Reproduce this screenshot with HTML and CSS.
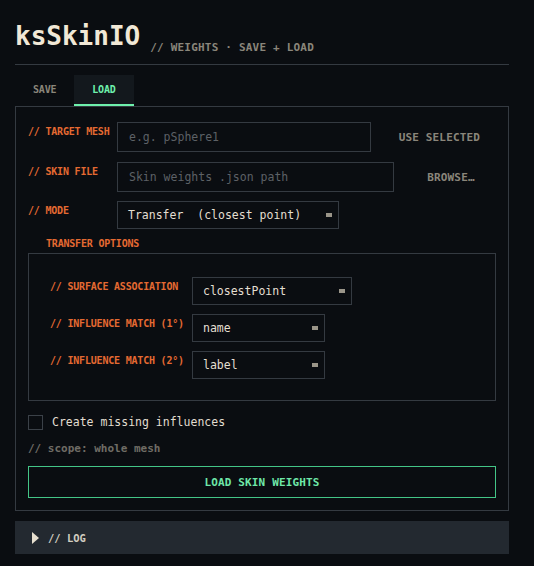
FILE: index.html
```html
<!DOCTYPE html>
<html lang="en">
<head>
    <meta charset="UTF-8">
    <title>ksSkinIO</title>
    <link rel="stylesheet" href="styles.css">
</head>
<body>
    <div class="app">
        <header class="head">
            <h1 class="title">ksSkinIO</h1>
            <span class="sub">// WEIGHTS · SAVE + LOAD</span>
        </header>

        <nav class="tabs">
            <button class="tab">SAVE</button>
            <button class="tab active">LOAD</button>
        </nav>

        <section class="panel">
            <div class="row">
                <label class="lbl">// TARGET MESH</label>
                <input class="field" type="text" placeholder="e.g. pSphere1">
                <button class="link">USE SELECTED</button>
            </div>
            <div class="row">
                <label class="lbl">// SKIN FILE</label>
                <input class="field" type="text" placeholder="Skin weights .json path">
                <button class="link">BROWSE…</button>
            </div>
            <div class="row">
                <label class="lbl">// MODE</label>
                <div class="select w-mode"><span class="val">Transfer  (closest point)</span><i class="caret"></i></div>
            </div>

            <h3 class="group-title">TRANSFER OPTIONS</h3>
            <div class="group">
                <div class="row">
                    <label class="lbl wide">// SURFACE ASSOCIATION</label>
                    <div class="select w-surface"><span class="val">closestPoint</span><i class="caret"></i></div>
                </div>
                <div class="row">
                    <label class="lbl wide">// INFLUENCE MATCH (1°)</label>
                    <div class="select w-match"><span class="val">name</span><i class="caret"></i></div>
                </div>
                <div class="row">
                    <label class="lbl wide">// INFLUENCE MATCH (2°)</label>
                    <div class="select w-match"><span class="val">label</span><i class="caret"></i></div>
                </div>
            </div>

            <label class="check"><span class="box"></span>Create missing influences</label>
            <p class="note">// scope: whole mesh</p>
            <button class="primary">LOAD SKIN WEIGHTS</button>
        </section>

        <div class="log"><span class="tri"></span>// LOG</div>
    </div>
</body>
</html>
```

FILE: styles.css
```css
body{
    margin:0;
    background:#0a0d11;
    font-family:"DejaVu Sans Mono", monospace;
    color:#e4dfd2;
}
.app{
    padding:23px 25px 0 15px;
}
button{
    font-family:inherit;
    background:none;
    border:none;
    cursor:pointer;
}

/* header */
.head{
    display:flex;
    align-items:flex-end;
    gap:10px;
    padding-bottom:11px;
    border-bottom:1px solid #343a41;
}
.title{
    margin:0;
    font-size:26px;
    line-height:26px;
    font-weight:700;
    color:#f1e8d6;
    padding-bottom:4px;
}
.sub{
    font-size:11px;
    line-height:11px;
    font-weight:700;
    letter-spacing:0.2px;
    color:#8a867b;
}

/* tabs */
.tabs{
    display:flex;
    margin-top:10px;
}
.tab{
    height:31px;
    padding:0 18px;
    font-size:10px;
    font-weight:700;
    letter-spacing:-0.2px;
    color:#8a867b;
    border-bottom:2px solid transparent;
}
.tab.active{
    background:#13181d;
    color:#6ef0ac;
    border-bottom-color:#6ef0ac;
}

/* panel */
.panel{
    border:1px solid #343a41;
    padding:15px 12px 12px;
}
.row{
    display:flex;
    align-items:flex-start;
    gap:12px;
    margin-bottom:10px;
}
.row:nth-child(2){
    margin-bottom:9px;
}
.row:nth-child(3){
    margin-bottom:0;
}
.lbl{
    width:77px;
    flex-shrink:0;
    white-space:nowrap;
    padding-top:3px;
    font-size:10px;
    line-height:14px;
    font-weight:700;
    letter-spacing:-0.2px;
    color:#e56a32;
}
.lbl.wide{
    width:130px;
}
.field{
    flex:1;
    min-width:0;
    height:30px;
    box-sizing:border-box;
    padding:0 11px;
    background:#0a0d11;
    border:1px solid #343a41;
    font-family:inherit;
    font-size:11.5px;
    color:#e4dfd2;
    outline:none;
}
.field::placeholder{
    color:#5d6166;
}
.link{
    height:30px;
    min-width:90px;
    padding:0 16px;
    font-size:11px;
    font-weight:700;
    letter-spacing:0.15px;
    color:#8a867b;
    white-space:nowrap;
}
.select{
    display:flex;
    align-items:center;
    justify-content:space-between;
    height:28px;
    box-sizing:border-box;
    padding:0 6px 0 10px;
    border:1px solid #343a41;
    font-size:11.5px;
    color:#e4dfd2;
}
.select .val{
    white-space:pre;
}
.caret{
    width:6px;
    height:4px;
    background:#9a9589;
}
.w-mode{ width:222px; }
.w-surface{ width:160px; }
.w-match{ width:133px; }

.group-title{
    margin:8px 0 2px 18px;
    font-size:10px;
    line-height:14px;
    font-weight:700;
    letter-spacing:-0.2px;
    color:#e56a32;
}
.group{
    border:1px solid #343a41;
    padding:23px 20px 12px 21px;
}
.group .row{
    margin-bottom:9px;
}

.check{
    display:flex;
    align-items:center;
    gap:9px;
    margin-top:13px;
    font-size:11.5px;
    line-height:16px;
    color:#e2ddd0;
}
.box{
    width:15px;
    height:15px;
    box-sizing:border-box;
    border:1px solid #3b4148;
}
.note{
    margin:12px 0 0 0;
    font-size:11px;
    line-height:14px;
    font-weight:700;
    color:#6f6c65;
}
.primary{
    display:block;
    width:100%;
    height:32px;
    margin-top:10px;
    border:1px solid #43c587;
    font-size:11px;
    font-weight:700;
    letter-spacing:0.15px;
    color:#6ee7a8;
}

/* log */
.log{
    display:flex;
    align-items:center;
    gap:9px;
    height:33px;
    margin-top:10px;
    padding-left:17px;
    background:#232930;
    font-size:10.5px;
    font-weight:700;
    color:#d2cdc0;
}
.tri{
    width:0;
    height:0;
    border-left:7px solid #e6dfcf;
    border-top:6.5px solid transparent;
    border-bottom:6.5px solid transparent;
}
```
